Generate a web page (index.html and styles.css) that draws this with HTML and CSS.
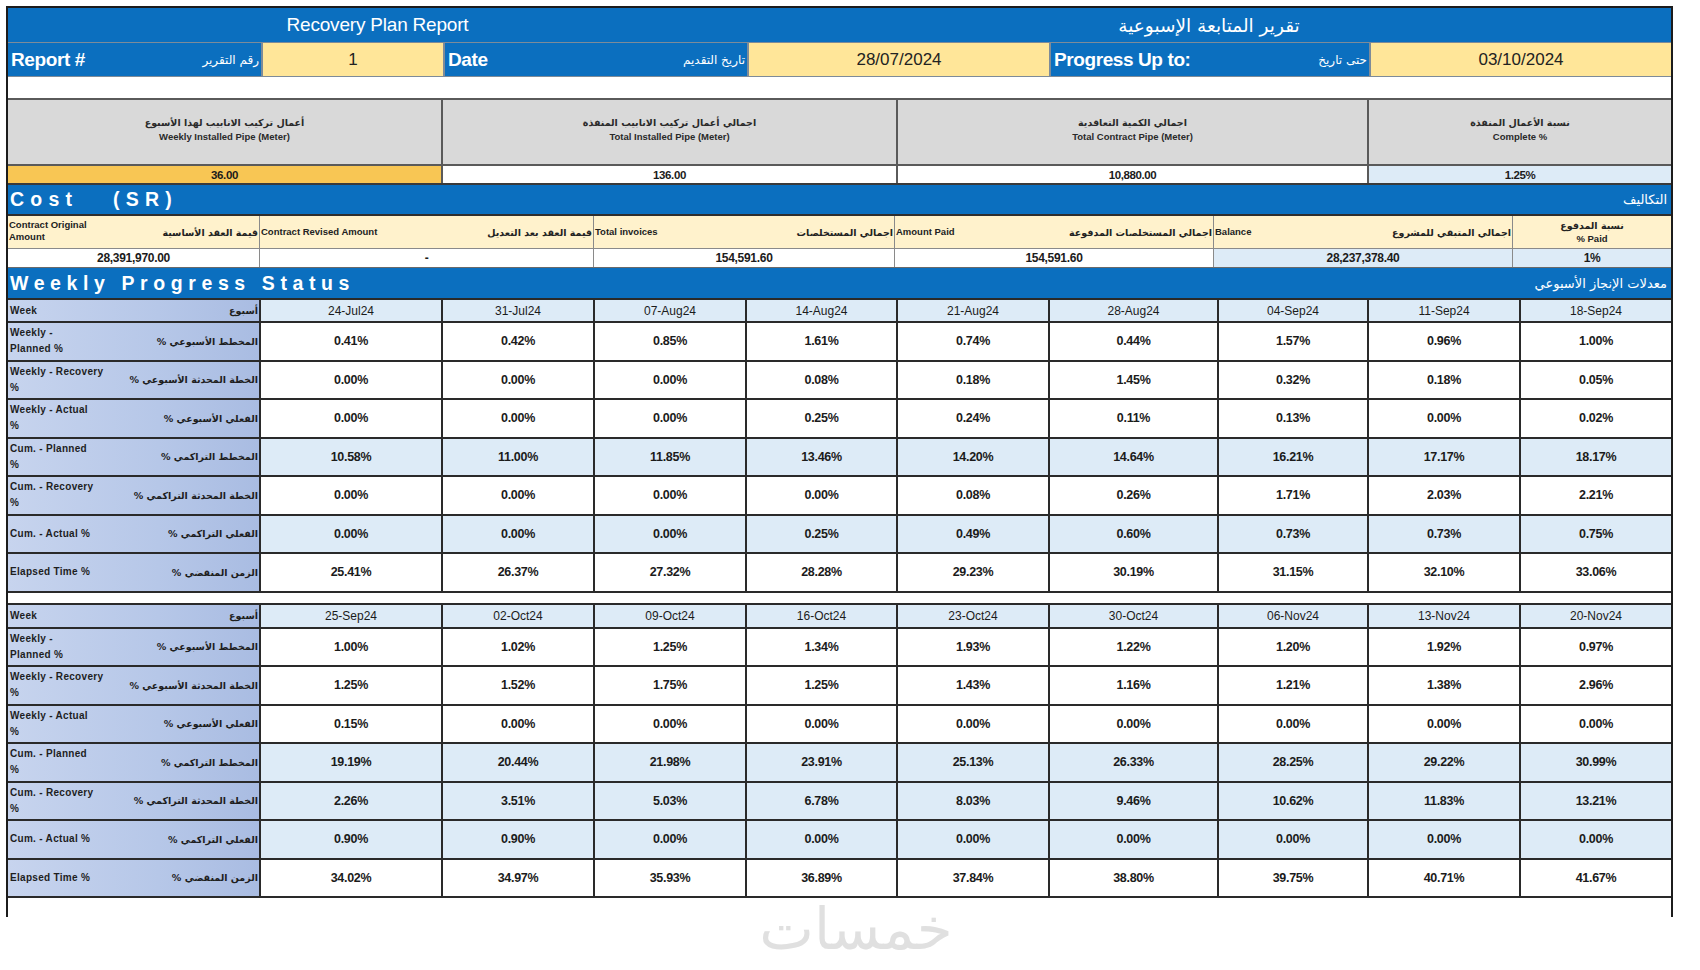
FILE: index.html
```html
<!DOCTYPE html>
<html lang="en">
<head>
<meta charset="utf-8">
<title>Recovery Plan Report</title>
<link rel="stylesheet" href="styles.css">
</head>
<body>
<div class="page">
  <div class="sheet">
    <div class="title-bar">
      <div class="title-en">Recovery Plan Report</div>
      <div class="title-ar ar" dir="rtl">تقرير المتابعة الإسبوعية</div>
    </div>

    <div class="report-row">
      <div class="rb"><span class="rb-en">Report #</span><span class="rb-ar ar" dir="rtl">رقم التقرير</span></div>
      <div class="ry">1</div>
      <div class="rb"><span class="rb-en">Date</span><span class="rb-ar ar" dir="rtl">تاريخ التقديم</span></div>
      <div class="ry">28/07/2024</div>
      <div class="rb"><span class="rb-en">Progress Up to:</span><span class="rb-ar ar" dir="rtl">حتى تاريخ</span></div>
      <div class="ry">03/10/2024</div>
    </div>

    <div class="blank-row"></div>

    <div class="summary">
      <div class="sh"><span class="ar" dir="rtl">أعمال تركيب الانابيب لهذا الأسبوع</span><span>Weekly Installed Pipe (Meter)</span></div>
      <div class="sh"><span class="ar" dir="rtl">اجمالي أعمال تركيب الانابيب المنفذة</span><span>Total Installed Pipe (Meter)</span></div>
      <div class="sh"><span class="ar" dir="rtl">اجمالي الكمية التعاقدية</span><span>Total Contract Pipe (Meter)</span></div>
      <div class="sh"><span class="ar" dir="rtl">نسبة الأعمال المنفذة</span><span>Complete %</span></div>
      <div class="sv gold">36.00</div>
      <div class="sv">136.00</div>
      <div class="sv">10,880.00</div>
      <div class="sv lb">1.25%</div>
    </div>

    <div class="section-bar">
      <span class="sec-en cost-title">Cost&nbsp;&nbsp;&nbsp;(SR)</span>
      <span class="sec-ar ar" dir="rtl">التكاليف</span>
    </div>

    <div class="cost">
      <div class="ch"><span class="ch-en narrow">Contract Original Amount</span><span class="ch-ar ar" dir="rtl">قيمة العقد الأساسية</span></div>
      <div class="ch"><span class="ch-en">Contract Revised Amount</span><span class="ch-ar ar" dir="rtl">قيمة العقد بعد التعديل</span></div>
      <div class="ch"><span class="ch-en">Total invoices</span><span class="ch-ar ar" dir="rtl">اجمالي المستخلصات</span></div>
      <div class="ch"><span class="ch-en">Amount Paid</span><span class="ch-ar ar" dir="rtl">اجمالي المستخلصات المدفوعة</span></div>
      <div class="ch"><span class="ch-en">Balance</span><span class="ch-ar ar" dir="rtl">اجمالي المتبقي للمشروع</span></div>
      <div class="ch ch-center"><span class="ar" dir="rtl">نسبة المدفوع</span><span>% Paid</span></div>
      <div class="cv">28,391,970.00</div>
      <div class="cv">-</div>
      <div class="cv">154,591.60</div>
      <div class="cv">154,591.60</div>
      <div class="cv lb">28,237,378.40</div>
      <div class="cv lb">1%</div>
    </div>

    <div class="section-bar tall">
      <span class="sec-en">Weekly Progress Status</span>
      <span class="sec-ar ar" dir="rtl">معدلات الإنجاز الأسبوعي</span>
    </div>

    <div class="progress">
      <div class="lbl"><span class="en">Week</span><span class="ar" dir="rtl">أسبوع</span></div>
      <div class="wk">24-Jul24</div><div class="wk">31-Jul24</div><div class="wk">07-Aug24</div><div class="wk">14-Aug24</div><div class="wk">21-Aug24</div><div class="wk">28-Aug24</div><div class="wk">04-Sep24</div><div class="wk">11-Sep24</div><div class="wk">18-Sep24</div>

      <div class="lbl"><span class="en">Weekly -<br>Planned %</span><span class="ar" dir="rtl">المخطط الأسبوعي %</span></div>
      <div class="v">0.41%</div><div class="v">0.42%</div><div class="v">0.85%</div><div class="v">1.61%</div><div class="v">0.74%</div><div class="v">0.44%</div><div class="v">1.57%</div><div class="v">0.96%</div><div class="v">1.00%</div>

      <div class="lbl"><span class="en">Weekly - Recovery<br>%</span><span class="ar" dir="rtl">الخطة المحدثة الأسبوعي %</span></div>
      <div class="v">0.00%</div><div class="v">0.00%</div><div class="v">0.00%</div><div class="v">0.08%</div><div class="v">0.18%</div><div class="v">1.45%</div><div class="v">0.32%</div><div class="v">0.18%</div><div class="v">0.05%</div>

      <div class="lbl"><span class="en">Weekly - Actual<br>%</span><span class="ar" dir="rtl">الفعلي الأسبوعي %</span></div>
      <div class="v">0.00%</div><div class="v">0.00%</div><div class="v">0.00%</div><div class="v">0.25%</div><div class="v">0.24%</div><div class="v">0.11%</div><div class="v">0.13%</div><div class="v">0.00%</div><div class="v">0.02%</div>

      <div class="lbl"><span class="en">Cum. - Planned<br>%</span><span class="ar" dir="rtl">المخطط التراكمي %</span></div>
      <div class="v lb">10.58%</div><div class="v lb">11.00%</div><div class="v lb">11.85%</div><div class="v lb">13.46%</div><div class="v lb">14.20%</div><div class="v lb">14.64%</div><div class="v lb">16.21%</div><div class="v lb">17.17%</div><div class="v lb">18.17%</div>

      <div class="lbl"><span class="en">Cum. - Recovery<br>%</span><span class="ar" dir="rtl">الخطة المحدثة التراكمي %</span></div>
      <div class="v">0.00%</div><div class="v">0.00%</div><div class="v">0.00%</div><div class="v">0.00%</div><div class="v">0.08%</div><div class="v">0.26%</div><div class="v">1.71%</div><div class="v">2.03%</div><div class="v">2.21%</div>

      <div class="lbl"><span class="en">Cum. - Actual %</span><span class="ar" dir="rtl">الفعلي التراكمي %</span></div>
      <div class="v lb">0.00%</div><div class="v lb">0.00%</div><div class="v lb">0.00%</div><div class="v lb">0.25%</div><div class="v lb">0.49%</div><div class="v lb">0.60%</div><div class="v lb">0.73%</div><div class="v lb">0.73%</div><div class="v lb">0.75%</div>

      <div class="lbl"><span class="en">Elapsed Time %</span><span class="ar" dir="rtl">الزمن المنقضي %</span></div>
      <div class="v">25.41%</div><div class="v">26.37%</div><div class="v">27.32%</div><div class="v">28.28%</div><div class="v">29.23%</div><div class="v">30.19%</div><div class="v">31.15%</div><div class="v">32.10%</div><div class="v">33.06%</div>
    </div>

    <div class="divider"></div>

    <div class="progress second">
      <div class="lbl"><span class="en">Week</span><span class="ar" dir="rtl">أسبوع</span></div>
      <div class="wk">25-Sep24</div><div class="wk">02-Oct24</div><div class="wk">09-Oct24</div><div class="wk">16-Oct24</div><div class="wk">23-Oct24</div><div class="wk">30-Oct24</div><div class="wk">06-Nov24</div><div class="wk">13-Nov24</div><div class="wk">20-Nov24</div>

      <div class="lbl"><span class="en">Weekly -<br>Planned %</span><span class="ar" dir="rtl">المخطط الأسبوعي %</span></div>
      <div class="v">1.00%</div><div class="v">1.02%</div><div class="v">1.25%</div><div class="v">1.34%</div><div class="v">1.93%</div><div class="v">1.22%</div><div class="v">1.20%</div><div class="v">1.92%</div><div class="v">0.97%</div>

      <div class="lbl"><span class="en">Weekly - Recovery<br>%</span><span class="ar" dir="rtl">الخطة المحدثة الأسبوعي %</span></div>
      <div class="v">1.25%</div><div class="v">1.52%</div><div class="v">1.75%</div><div class="v">1.25%</div><div class="v">1.43%</div><div class="v">1.16%</div><div class="v">1.21%</div><div class="v">1.38%</div><div class="v">2.96%</div>

      <div class="lbl"><span class="en">Weekly - Actual<br>%</span><span class="ar" dir="rtl">الفعلي الأسبوعي %</span></div>
      <div class="v">0.15%</div><div class="v">0.00%</div><div class="v">0.00%</div><div class="v">0.00%</div><div class="v">0.00%</div><div class="v">0.00%</div><div class="v">0.00%</div><div class="v">0.00%</div><div class="v">0.00%</div>

      <div class="lbl"><span class="en">Cum. - Planned<br>%</span><span class="ar" dir="rtl">المخطط التراكمي %</span></div>
      <div class="v lb">19.19%</div><div class="v lb">20.44%</div><div class="v lb">21.98%</div><div class="v lb">23.91%</div><div class="v lb">25.13%</div><div class="v lb">26.33%</div><div class="v lb">28.25%</div><div class="v lb">29.22%</div><div class="v lb">30.99%</div>

      <div class="lbl"><span class="en">Cum. - Recovery<br>%</span><span class="ar" dir="rtl">الخطة المحدثة التراكمي %</span></div>
      <div class="v lb">2.26%</div><div class="v lb">3.51%</div><div class="v lb">5.03%</div><div class="v lb">6.78%</div><div class="v lb">8.03%</div><div class="v lb">9.46%</div><div class="v lb">10.62%</div><div class="v lb">11.83%</div><div class="v lb">13.21%</div>

      <div class="lbl"><span class="en">Cum. - Actual %</span><span class="ar" dir="rtl">الفعلي التراكمي %</span></div>
      <div class="v lb">0.90%</div><div class="v lb">0.90%</div><div class="v lb">0.00%</div><div class="v lb">0.00%</div><div class="v lb">0.00%</div><div class="v lb">0.00%</div><div class="v lb">0.00%</div><div class="v lb">0.00%</div><div class="v lb">0.00%</div>

      <div class="lbl"><span class="en">Elapsed Time %</span><span class="ar" dir="rtl">الزمن المنقضي %</span></div>
      <div class="v">34.02%</div><div class="v">34.97%</div><div class="v">35.93%</div><div class="v">36.89%</div><div class="v">37.84%</div><div class="v">38.80%</div><div class="v">39.75%</div><div class="v">40.71%</div><div class="v">41.67%</div>
    </div>

    <div class="tail"></div>
  </div>
  <div class="watermark ar" dir="rtl">خمسات</div>
</div>
</body>
</html>
```

FILE: styles.css
```css
* { box-sizing: border-box; }

body {
  margin: 0;
  background: #ffffff;
  font-family: "Liberation Sans", Arial, sans-serif;
  color: #1b1b1b;
}

.ar {
  font-family: "DejaVu Sans", "Noto Sans", sans-serif;
}

.page {
  width: 1700px;
  height: 970px;
  padding: 6px 0 0 6px;
  overflow: hidden;
}

.sheet {
  width: 1667px;
  border: 2px solid #1c1c1c;
  border-bottom: none;
}

/* Title bar */
.title-bar {
  display: grid;
  grid-template-columns: 739px 1fr;
  height: 34px;
  background: #0b6fbf;
  color: #ffffff;
  align-items: center;
}
.title-en {
  text-align: center;
  font-size: 19px;
  letter-spacing: -0.2px;
}
.title-ar {
  text-align: center;
  font-size: 18.5px;
}

/* Report row */
.report-row {
  display: grid;
  grid-template-columns: 253px 180px 302px 300px 318px 1fr;
  column-gap: 2px;
  height: 35px;
  background: #7d8b99;
  border-top: 1px solid #7d8b99;
  border-bottom: 1px solid #7d8b99;
}
.rb {
  background: #0b6fbf;
  color: #ffffff;
  display: flex;
  align-items: center;
  justify-content: space-between;
  padding: 0 2px 0 3px;
}
.rb-en {
  font-weight: 700;
  font-size: 19px;
  letter-spacing: -0.4px;
}
.rb-ar {
  font-size: 12px;
}
.ry {
  background: #ffe699;
  display: flex;
  align-items: center;
  justify-content: center;
  font-size: 17px;
  color: #222;
}

.blank-row {
  height: 21px;
  background: #ffffff;
}

/* Summary */
.summary {
  display: grid;
  grid-template-columns: 433px 453px 469px 1fr;
  grid-template-rows: 64px 17px;
  gap: 2px;
  background: #5a5a5a;
  border-top: 2px solid #5a5a5a;
  border-bottom: 2px solid #3a3a3a;
}
.sh {
  background: #d9d9d9;
  display: flex;
  flex-direction: column;
  align-items: center;
  justify-content: center;
  gap: 3px;
  font-size: 9.5px;
  font-weight: 700;
  color: #2a2a2a;
  padding-bottom: 6px;
}
.sh .ar { font-size: 9.5px; }
.sv {
  background: #ffffff;
  display: flex;
  align-items: center;
  justify-content: center;
  font-size: 11.5px;
  font-weight: 700;
  letter-spacing: -0.4px;
}
.sv.gold { background: #f8c654; }
.lb { background: #ddebf7 !important; }

/* Section bars */
.section-bar {
  background: #0b6fbf;
  color: #ffffff;
  height: 29px;
  display: flex;
  align-items: center;
  justify-content: space-between;
  padding: 0 4px 0 2px;
}
.section-bar.tall { height: 30px; }
.sec-en {
  font-weight: 700;
  font-size: 19.5px;
  letter-spacing: 5.6px;
}
.cost-title { letter-spacing: 6.2px; }
.sec-ar {
  font-size: 13px;
}

/* Cost */
.cost {
  display: grid;
  grid-template-columns: 251px 333px 300px 318px 298px 1fr;
  grid-template-rows: 32px 18px;
  gap: 1px;
  background: #8a8a8a;
  border-top: 2px solid #2e2e2e;
  border-bottom: 1px solid #6a6a6a;
}
.ch {
  background: #fff2cc;
  display: flex;
  align-items: center;
  justify-content: space-between;
  font-size: 9.5px;
  font-weight: 700;
  color: #222;
  padding: 0 1px;
}
.ch-en { line-height: 12px; }
.ch-en.narrow { width: 90px; align-self: flex-start; padding-top: 3px; }
.ch-ar { font-size: 9.5px; }
.ch-center {
  flex-direction: column;
  justify-content: center;
  gap: 2px;
}
.cv {
  background: #ffffff;
  display: flex;
  align-items: center;
  justify-content: center;
  font-size: 12px;
  font-weight: 700;
  letter-spacing: -0.3px;
}

/* Weekly progress */
.progress {
  display: grid;
  grid-template-columns: 251px 180px 150px 150px 149px 150px 167px 148px 150px 1fr;
  grid-template-rows: 21px repeat(7, 36.5px);
  gap: 2px;
  background: #2a2a2a;
  border-top: 2px solid #2a2a2a;
  border-bottom: 2px solid #2a2a2a;
}
.progress.second {
  grid-template-rows: 22px repeat(7, 36.5px);
}
.lbl {
  background: linear-gradient(to right, #c7d4ee 0%, #b6c7e8 60%, #a9bce2 100%);
  display: flex;
  align-items: center;
  justify-content: space-between;
  padding: 0 1px 0 2px;
  font-size: 10px;
  font-weight: 700;
  color: #1e1e1e;
}
.lbl .en {
  line-height: 16px;
  letter-spacing: 0.3px;
}
.lbl .ar {
  font-size: 9.5px;
  font-weight: 700;
}
.wk {
  background: #ddebf7;
  display: flex;
  align-items: center;
  justify-content: center;
  font-size: 12px;
  color: #1b1b1b;
}
.v {
  background: #ffffff;
  display: flex;
  align-items: center;
  justify-content: center;
  font-size: 12.5px;
  font-weight: 700;
  letter-spacing: -0.3px;
}

.divider {
  height: 10px;
  background: #ffffff;
}

.tail {
  height: 19px;
  background: #ffffff;
}

.watermark {
  margin-top: -18px;
  width: 1700px;
  text-align: center;
  font-size: 58px;
  line-height: 60px;
  color: #e0e0e0;
}
```
